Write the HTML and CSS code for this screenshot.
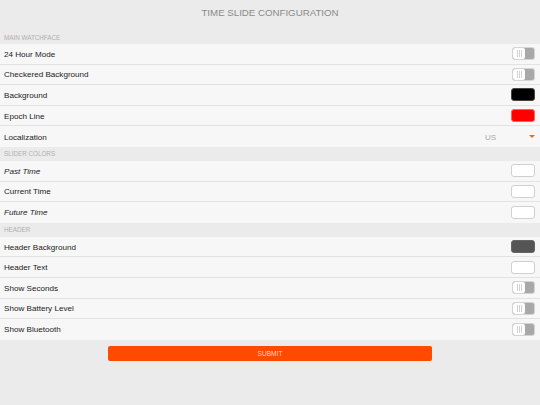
FILE: index.html
```html
<!DOCTYPE html>
<html>
<head>
<meta charset="utf-8">
<link rel="stylesheet" href="styles.css">
</head>
<body>
<header class="title">TIME SLIDE CONFIGURATION</header>
<main>
  <section class="group">
    <div class="group-label">MAIN WATCHFACE</div>
    <div class="row"><span class="label">24 Hour Mode</span><span class="toggle"><span class="knob"><i></i><i></i><i></i></span></span></div>
    <div class="row"><span class="label">Checkered Background</span><span class="toggle"><span class="knob"><i></i><i></i><i></i></span></span></div>
    <div class="row"><span class="label">Background</span><span class="swatch swatch-black"></span></div>
    <div class="row"><span class="label">Epoch Line</span><span class="swatch swatch-red"></span></div>
    <div class="row"><span class="label">Localization</span><span class="select"><span class="select-value">US</span><span class="caret"></span></span></div>
  </section>
  <section class="group">
    <div class="group-label">SLIDER COLORS</div>
    <div class="row"><span class="label italic">Past Time</span><span class="swatch swatch-white"></span></div>
    <div class="row"><span class="label">Current Time</span><span class="swatch swatch-white"></span></div>
    <div class="row"><span class="label italic">Future Time</span><span class="swatch swatch-white"></span></div>
  </section>
  <section class="group">
    <div class="group-label">HEADER</div>
    <div class="row"><span class="label">Header Background</span><span class="swatch swatch-dark"></span></div>
    <div class="row"><span class="label">Header Text</span><span class="swatch swatch-white"></span></div>
    <div class="row"><span class="label">Show Seconds</span><span class="toggle"><span class="knob"><i></i><i></i><i></i></span></span></div>
    <div class="row"><span class="label">Show Battery Level</span><span class="toggle"><span class="knob"><i></i><i></i><i></i></span></span></div>
    <div class="row"><span class="label">Show Bluetooth</span><span class="toggle"><span class="knob"><i></i><i></i><i></i></span></span></div>
  </section>
  <div class="actions"><button class="submit">SUBMIT</button></div>
</main>
</body>
</html>
```

FILE: styles.css
```css
html, body {
  margin: 0;
  padding: 0;
}
body {
  background: #ebebeb;
  font-family: "Liberation Sans", Arial, sans-serif;
  color: #222;
  width: 540px;
  height: 405px;
  overflow: hidden;
}
.title {
  height: 25px;
  display: flex;
  align-items: center;
  justify-content: center;
  font-size: 9.7px;
  color: #8a8a8a;
}
.group-label {
  height: 19px;
  display: flex;
  align-items: flex-end;
  padding: 0 0 3px 4px;
  box-sizing: border-box;
  font-size: 6.3px;
  color: #b0b0b0;
  background: #ebebeb;
}
.group + .group .group-label {
  height: 14px;
  align-items: center;
  padding-bottom: 0;
}
.row {
  height: 20.6px;
  box-sizing: border-box;
  background: #f7f7f7;
  border-bottom: 1px solid #e2e2e2;
  display: flex;
  align-items: center;
  justify-content: space-between;
  padding: 0 5px 0 4px;
}
.row:last-child {
  border-bottom: none;
}
.label {
  font-size: 8.1px;
  color: #222;
  padding-top: 1px;
}
.italic {
  font-style: italic;
}
.toggle {
  width: 23px;
  height: 13px;
  box-sizing: border-box;
  border: 1px solid #d4d4d4;
  border-radius: 3px;
  background: #a8a8a8;
  display: flex;
  overflow: hidden;
}
.knob {
  width: 12px;
  height: 100%;
  background: #fff;
  border-radius: 2px;
  display: flex;
  align-items: center;
  justify-content: center;
  gap: 1px;
}
.knob i {
  display: block;
  width: 1px;
  height: 7px;
  background: #d2d2d2;
}
.swatch {
  width: 24px;
  height: 13px;
  box-sizing: border-box;
  border: 1px solid #d0d0d0;
  border-radius: 3px;
}
.swatch-black { background: #000; border-color: #444; }
.swatch-red { background: #ff0000; border-color: #ff6060; }
.swatch-white { background: #fff; }
.swatch-dark { background: #555; border-color: #666; }
.select {
  display: flex;
  align-items: center;
  width: 50px;
  justify-content: space-between;
}
.select-value {
  font-size: 8.1px;
  color: #a8a8a8;
  padding-top: 1px;
}
.caret {
  width: 0;
  height: 0;
  border-left: 3px solid transparent;
  border-right: 3px solid transparent;
  border-top: 3.5px solid #f26522;
}
.actions {
  display: flex;
  justify-content: center;
  padding-top: 6px;
}
.submit {
  width: 324px;
  height: 15px;
  border: none;
  border-radius: 2px;
  background: #ff4a00;
  color: #ffd2bf;
  font-family: "Liberation Sans", Arial, sans-serif;
  font-size: 6.6px;
  padding: 0;
}
```
